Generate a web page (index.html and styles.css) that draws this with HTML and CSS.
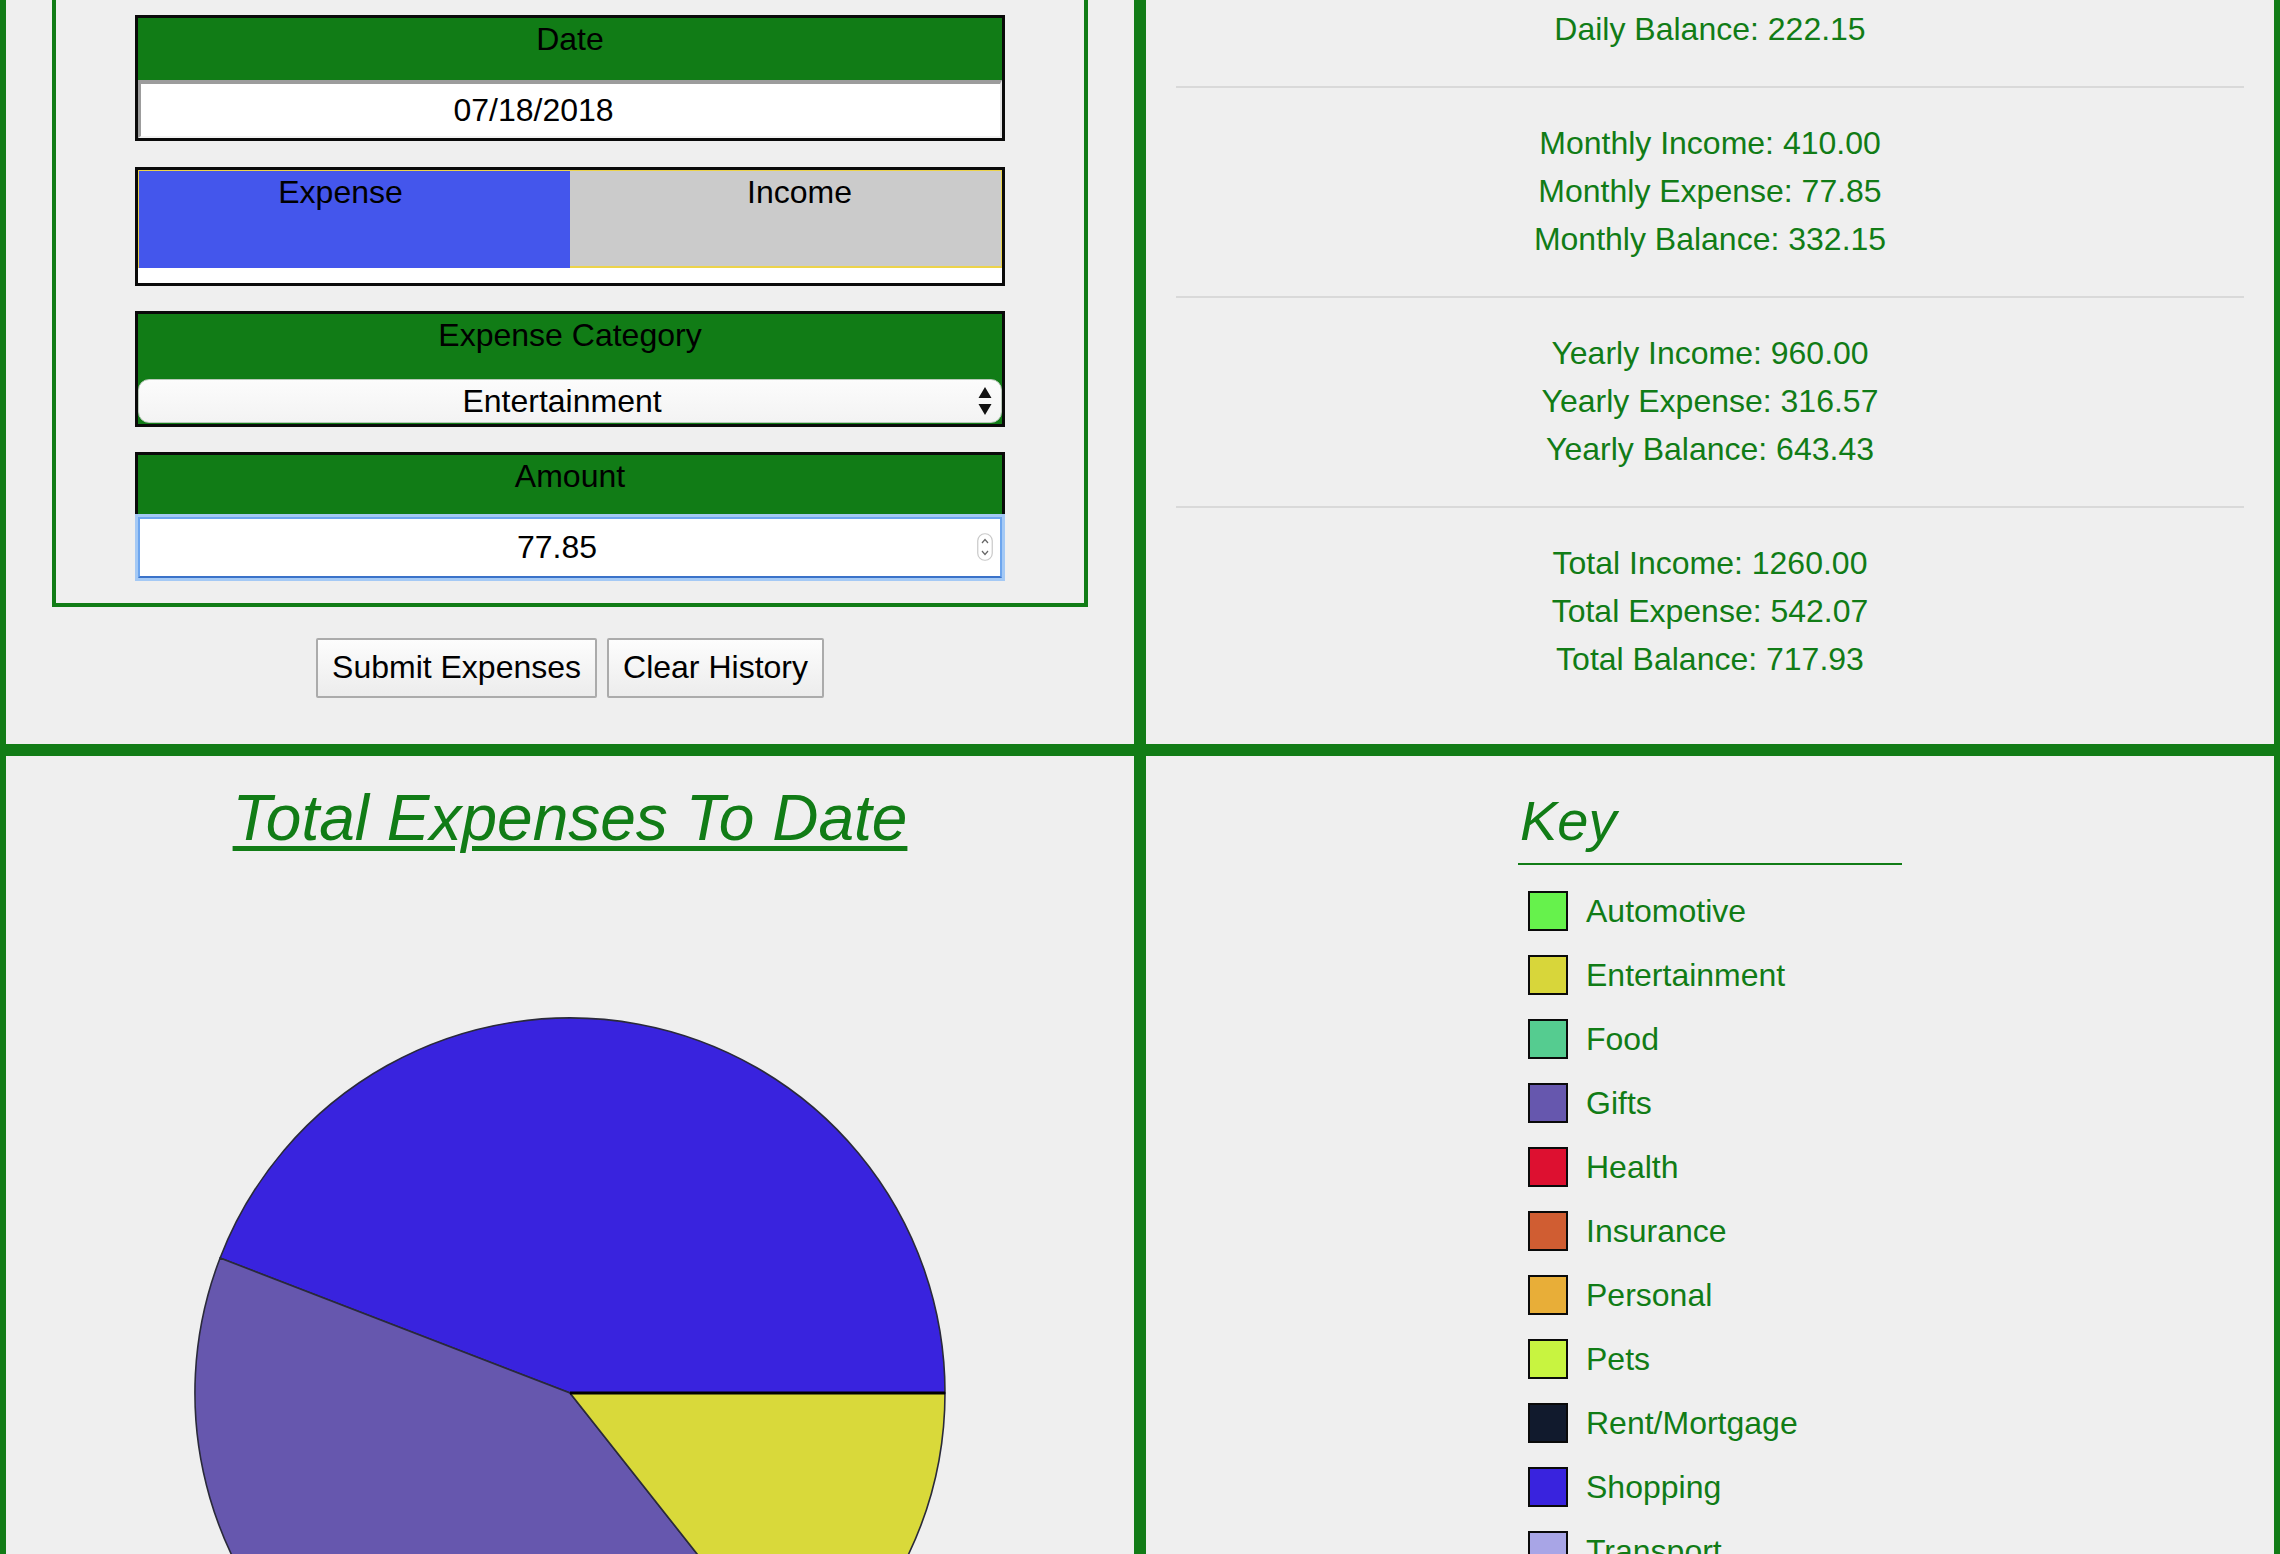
FILE: index.html
```html
<!DOCTYPE html>
<html lang="en">
<head>
<meta charset="utf-8">
<title>Expense Tracker</title>
<link rel="stylesheet" href="styles.css">
</head>
<body>
<div class="page">
  <section class="cell cell-top form-cell">
    <div class="fieldset">
      <div class="box">
        <div class="box-head">Date</div>
        <input class="date-input" type="text" value="07/18/2018">
      </div>
      <div class="box toggle-box">
        <div class="toggle">
          <div class="half half-expense">Expense</div>
          <div class="half half-income">Income</div>
        </div>
      </div>
      <div class="box box-select">
        <div class="box-head head-select">Expense Category</div>
        <div class="select-wrap">
          <select class="cat-select">
            <option>Entertainment</option>
          </select>
          <svg class="select-arrows" width="14" height="28" viewBox="0 0 14 28"><path d="M7 0 L13.5 11 L0.5 11 Z M7 28 L13.5 17 L0.5 17 Z" fill="#111"/></svg>
        </div>
      </div>
      <div class="box box-amount">
        <div class="box-head">Amount</div>
        <div class="amount-wrap">
          <input class="amount-input" type="text" value="77.85">
          <svg class="spinner" width="16" height="28" viewBox="0 0 16 28"><rect x="0.75" y="0.75" width="14.5" height="26.5" rx="7" fill="#fff" stroke="#c9c9c9" stroke-width="1.2"/><path d="M5 10 L8 6.5 L11 10 M5 18 L8 21.5 L11 18" fill="none" stroke="#666" stroke-width="1.2"/></svg>
        </div>
      </div>
    </div>
    <div class="buttons">
      <button class="btn" type="button">Submit Expenses</button>
      <button class="btn" type="button">Clear History</button>
    </div>
  </section>

  <section class="cell cell-top stats-cell">
    <div class="group first">
      <div class="line">Daily Balance: 222.15</div>
    </div>
    <hr class="sep">
    <div class="group">
      <div class="line">Monthly Income: 410.00</div>
      <div class="line">Monthly Expense: 77.85</div>
      <div class="line">Monthly Balance: 332.15</div>
    </div>
    <hr class="sep">
    <div class="group">
      <div class="line">Yearly Income: 960.00</div>
      <div class="line">Yearly Expense: 316.57</div>
      <div class="line">Yearly Balance: 643.43</div>
    </div>
    <hr class="sep">
    <div class="group">
      <div class="line">Total Income: 1260.00</div>
      <div class="line">Total Expense: 542.07</div>
      <div class="line">Total Balance: 717.93</div>
    </div>
  </section>

  <section class="cell chart-cell">
    <h1 class="chart-title">Total Expenses To Date</h1>
    <svg class="pie" width="760" height="760" viewBox="0 0 760 760">
      <path d="M380 380 L755 380 A375 375 0 0 0 30.1 245 Z" fill="#3923de" stroke="#2a2a3a" stroke-width="1.6"/>
      <path d="M380 380 L612.4 674.3 A375 375 0 0 1 30.1 245 Z" fill="#6657ae" stroke="#2a2a3a" stroke-width="1.6"/>
      <path d="M380 380 L755 380 A375 375 0 0 1 612.4 674.3 Z" fill="#d9d93a" stroke="#2a2a3a" stroke-width="1.6"/>
      <line x1="380" y1="380" x2="755" y2="380" stroke="#000" stroke-width="3"/>
    </svg>
  </section>

  <section class="cell key-cell">
    <div class="key">
      <h2 class="key-title">Key</h2>
      <ul class="legend">
        <li class="item"><span class="swatch c-auto"></span>Automotive</li>
        <li class="item"><span class="swatch c-ent"></span>Entertainment</li>
        <li class="item"><span class="swatch c-food"></span>Food</li>
        <li class="item"><span class="swatch c-gifts"></span>Gifts</li>
        <li class="item"><span class="swatch c-health"></span>Health</li>
        <li class="item"><span class="swatch c-ins"></span>Insurance</li>
        <li class="item"><span class="swatch c-pers"></span>Personal</li>
        <li class="item"><span class="swatch c-pets"></span>Pets</li>
        <li class="item"><span class="swatch c-rent"></span>Rent/Mortgage</li>
        <li class="item"><span class="swatch c-shop"></span>Shopping</li>
        <li class="item"><span class="swatch c-trans"></span>Transport</li>
      </ul>
    </div>
  </section>
</div>
</body>
</html>
```

FILE: styles.css
```css
* { box-sizing: border-box; }

html, body {
  margin: 0;
  padding: 0;
}

body {
  width: 2280px;
  height: 1554px;
  overflow: hidden;
  background: #efefef;
  font-family: "Liberation Sans", Arial, Helvetica, sans-serif;
  font-size: 32px;
  color: #000;
}

.page {
  display: grid;
  grid-template-columns: 1140px 1140px;
  grid-template-rows: 750px auto;
}

.cell {
  border: 6px solid #117c16;
  background: #efefef;
}

.cell-top {
  border-top: 0;
}

/* ---------- form cell ---------- */
.form-cell {
  padding: 0 0 44px;
}

.fieldset {
  margin: 0 46px;
  border: 4px solid #117c16;
  border-top: 0;
  padding: 15px 0 25px;
  display: flex;
  flex-direction: column;
  align-items: center;
  gap: 25px;
}

.box {
  width: 870px;
  border: 3px solid #0a0a0a;
  background: #117c16;
}

.box-head {
  height: 62px;
  padding-top: 3px;
  text-align: center;
  line-height: 37px;
  color: #000;
}

.head-select {
  height: 65px;
}

.date-input,
.amount-input {
  display: block;
  width: 100%;
  height: 58px;
  margin: 0;
  font-family: inherit;
  font-size: 32px;
  color: #000;
  text-align: center;
  background: #fff;
  outline: none;
}

.date-input {
  border-style: solid;
  border-width: 4px 2px 2px 3px;
  border-color: #9c9c9c #e6e6e6 #f2f2f2 #9c9c9c;
  padding: 0 74px 0 0;
}

.toggle-box {
  background: #fff;
  height: 119px;
  margin-top: 1px;
}

.toggle {
  display: flex;
  height: 98px;
  border: 1px solid #ecd34a;
  border-bottom-width: 2px;
}

.half {
  flex: 1;
  text-align: center;
  padding-top: 3px;
  line-height: 37px;
}

.half-expense {
  background: #4456ec;
  padding-right: 28px;
  margin-bottom: -2px;
}

.half-income {
  background: #cbcbcb;
  padding-left: 28px;
}

.box-select {
  height: 116px;
}

.select-wrap,
.amount-wrap {
  position: relative;
}

.cat-select {
  -webkit-appearance: none;
  appearance: none;
  display: block;
  width: 100%;
  height: 44px;
  margin: 0;
  border: 1px solid #b9c9b9;
  border-radius: 11px;
  background: linear-gradient(#fcfcfc, #f3f3f3);
  font-family: inherit;
  font-size: 32px;
  color: #000;
  text-align: center;
  text-align-last: center;
  padding: 0 16px 0 0;
  outline: none;
}

.select-arrows {
  position: absolute;
  right: 10px;
  top: 8px;
}

.box-amount {
  height: 126px;
}

.amount-input {
  height: 61px;
  border: 2px solid #6ea6ee;
  border-bottom-color: #3a72c9;
  box-shadow: 0 0 0 3px #a4c9f5;
  padding: 0 26px 0 0;
}

.spinner {
  position: absolute;
  right: 9px;
  top: 16px;
}

.buttons {
  display: flex;
  justify-content: center;
  gap: 10px;
  margin-top: 31px;
}

.btn {
  height: 60px;
  padding: 0 14px 2px;
  border: 2px solid #ababab;
  border-radius: 2px;
  background: linear-gradient(#fdfdfd, #ececec);
  font-family: inherit;
  font-size: 32px;
  color: #000;
}

/* ---------- stats cell ---------- */
.stats-cell {
  padding-top: 5px;
  color: #117c16;
  text-align: center;
}

.group {
  padding: 31px 0 33px;
}

.group.first {
  padding-top: 0;
}

.line {
  line-height: 48px;
}

.sep {
  margin: 0 30px;
  height: 2px;
  border: 0;
  background: #d9d9d9;
}

/* ---------- chart cell ---------- */
.chart-cell {
  padding-top: 25px;
  display: flex;
  flex-direction: column;
  align-items: center;
}

.chart-title {
  margin: 0;
  font-size: 64px;
  font-weight: normal;
  font-style: italic;
  text-decoration: underline;
  text-decoration-thickness: 5px;
  text-underline-offset: 6px;
  color: #117c16;
  line-height: 74px;
}

.pie {
  display: block;
  margin-top: 158px;
}

/* ---------- key cell ---------- */
.key-cell {
  padding-top: 33px;
  color: #117c16;
}

.key {
  width: 384px;
  margin: 0 auto;
}

.key-title {
  margin: 0;
  padding: 0 0 10px 2px;
  font-size: 56px;
  font-weight: normal;
  font-style: italic;
  line-height: 64px;
  border-bottom: 2px solid #117c16;
}

.legend {
  list-style: none;
  margin: 14px 0 0;
  padding: 0;
}

.item {
  display: flex;
  align-items: center;
  gap: 18px;
  height: 64px;
  padding-left: 10px;
  white-space: nowrap;
}

.swatch {
  flex: none;
  width: 40px;
  height: 40px;
  border: 2px solid #0a0a0a;
}

.c-auto { background: #66f24c; }
.c-ent { background: #d8d63a; }
.c-food { background: #55cc90; }
.c-gifts { background: #6657ae; }
.c-health { background: #dd1030; }
.c-ins { background: #d05d32; }
.c-pers { background: #e8ae38; }
.c-pets { background: #c8f440; }
.c-rent { background: #111a2d; }
.c-shop { background: #3923de; }
.c-trans { background: #a8a5e6; }
```
